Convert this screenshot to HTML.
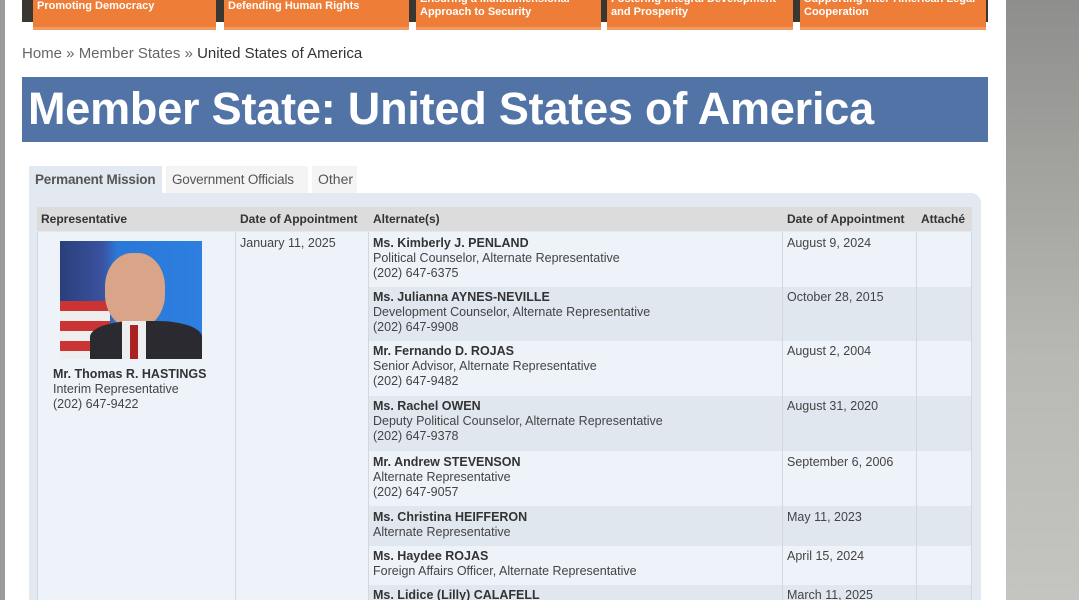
<!DOCTYPE html>
<html style="overflow:hidden;height:600px"><head><meta charset="utf-8"><style>
*{margin:0;padding:0;box-sizing:border-box}
body{width:1079px;height:600px;overflow:hidden;background:#fff;font-family:"Liberation Sans",sans-serif;color:#333;position:relative}
.abs{position:absolute}
.lg{left:0;top:0;width:5px;height:600px;background:#9a9a98}
.rg{left:1006px;top:0;width:73px;height:600px;background:linear-gradient(#8e8e8c,#b8b8b4 60%,#c4c4c0)}
.dk{background:#3a3632;height:22px;top:0}
.tile{top:0;height:30px;background:#ee7d37;color:#fff;font-weight:bold;font-size:11px;line-height:13px;padding:0 4px;border-bottom:3px solid #f29a5f;overflow:hidden;white-space:nowrap}
.bc{left:22px;top:45px;font-size:15px;color:#666}
.bc b{font-weight:normal;color:#333}
.title{left:22px;top:77px;width:966px;height:65px;background:#5273a6;color:#fff;font-weight:bold;font-size:45px;line-height:64px;padding-left:6px;letter-spacing:-0.2px;white-space:nowrap}
.tab{top:166px;height:27px;font-size:14px;line-height:27px;padding:0 6px;background:#f4f4f4;color:#555;white-space:nowrap;overflow:hidden}
.box{left:29px;top:193px;width:952px;height:407px;background:#e3e9f1;border-radius:0 10px 0 0}
.h{top:207px;height:24px;background:#dcdcdc;font-size:12px;font-weight:bold;line-height:24px;padding-left:4px;color:#333;white-space:nowrap}
.c{font-size:12.5px;line-height:15px;padding:4px 4px;color:#444;border-right:1px solid #d3d8de;overflow:hidden}
.c b{color:#333}
</style></head><body>
<div class="abs lg"></div>
<div class="abs dk" style="left:22px;width:966px"></div>
<div class="abs tile" style="left:33px;width:183px">Promoting Democracy</div>
<div class="abs tile" style="left:224px;width:185px">Defending Human Rights</div>
<div class="abs tile" style="left:416px;width:185px"><div style="margin-top:-7px">Ensuring a Multidimensional<br>Approach to Security</div></div>
<div class="abs tile" style="left:607px;width:186px"><div style="margin-top:-7px">Fostering Integral Development<br>and Prosperity</div></div>
<div class="abs tile" style="left:800px;width:186px"><div style="margin-top:-7px">Supporting Inter-American Legal<br>Cooperation</div></div>
<div class="abs rg"></div>
<div class="abs bc">Home » Member States » <b>United States of America</b></div>
<div class="abs title">Member State: United States of America</div>
<div class="abs box"></div>
<div class="abs tab" style="left:29px;width:133px;background:#e3e9f1;font-weight:bold;color:#555;font-size:13.5px;letter-spacing:-0.2px">Permanent Mission</div>
<div class="abs tab" style="left:166px;width:142px;font-size:13.5px;letter-spacing:-0.2px">Government Officials</div>
<div class="abs tab" style="left:312px;width:45px">Other</div>
<div class="abs h" style="left:37px;width:935px"></div>
<div class="abs h" style="left:37px">Representative</div>
<div class="abs h" style="left:236px">Date of Appointment</div>
<div class="abs h" style="left:369px">Alternate(s)</div>
<div class="abs h" style="left:783px">Date of Appointment</div>
<div class="abs h" style="left:917px">Attaché</div>
<div class="abs c" style="left:37px;top:232px;width:199px;height:368px;background:#eef2f9;border-left:1px solid #d3d8de">
<div style="margin:5px 0 0 18px;width:142px;height:118px;background:linear-gradient(90deg,#2a3f7a 0,#3a52a0 30%,#2a78d8 40%,#2d7fe0 100%);position:relative;overflow:hidden">
<div style="position:absolute;left:0;top:60px;width:50px;height:58px;background:repeating-linear-gradient(#c33 0 10px,#eee 10px 20px)"></div>
<div style="position:absolute;left:45px;top:12px;width:60px;height:75px;border-radius:45%;background:#d9a488"></div>
<div style="position:absolute;left:30px;top:80px;width:112px;height:40px;border-radius:40% 40% 0 0;background:#2a2a30"></div>
<div style="position:absolute;left:62px;top:80px;width:24px;height:38px;background:#eee"></div>
<div style="position:absolute;left:70px;top:84px;width:8px;height:34px;background:#a22"></div>
</div>
<div style="margin:8px 0 0 11px"><b>Mr. Thomas R. HASTINGS</b><br>Interim Representative<br>(202) 647-9422</div></div>
<div class="abs c" style="left:236px;top:232px;width:133px;height:368px;background:#eef2f9">January 11, 2025</div>

<div class="abs c" style="left:369px;top:232px;width:414px;height:55px;background:#eef2f9"><b>Ms. Kimberly J. PENLAND</b><br>Political Counselor, Alternate Representative<br>(202) 647-6375</div>
<div class="abs c" style="left:783px;top:232px;width:134px;height:55px;background:#eef2f9">August 9, 2024</div>
<div class="abs c" style="left:917px;top:232px;width:55px;height:55px;background:#eef2f9"></div>

<div class="abs c" style="left:369px;top:287px;width:414px;height:54px;background:#e1e7ef;padding-top:3px"><b>Ms. Julianna AYNES-NEVILLE</b><br>Development Counselor, Alternate Representative<br>(202) 647-9908</div>
<div class="abs c" style="left:783px;top:287px;width:134px;height:54px;background:#e1e7ef;padding-top:3px">October 28, 2015</div>
<div class="abs c" style="left:917px;top:287px;width:55px;height:54px;background:#e1e7ef"></div>

<div class="abs c" style="left:369px;top:341px;width:414px;height:55px;background:#eef2f9;padding-top:3px"><b>Mr. Fernando D. ROJAS</b><br>Senior Advisor, Alternate Representative<br>(202) 647-9482</div>
<div class="abs c" style="left:783px;top:341px;width:134px;height:55px;background:#eef2f9;padding-top:3px">August 2, 2004</div>
<div class="abs c" style="left:917px;top:341px;width:55px;height:55px;background:#eef2f9"></div>

<div class="abs c" style="left:369px;top:396px;width:414px;height:55px;background:#e1e7ef;padding-top:3px"><b>Ms. Rachel OWEN</b><br>Deputy Political Counselor, Alternate Representative<br>(202) 647-9378</div>
<div class="abs c" style="left:783px;top:396px;width:134px;height:55px;background:#e1e7ef;padding-top:3px">August 31, 2020</div>
<div class="abs c" style="left:917px;top:396px;width:55px;height:55px;background:#e1e7ef"></div>

<div class="abs c" style="left:369px;top:451px;width:414px;height:55px;background:#eef2f9"><b>Mr. Andrew STEVENSON</b><br>Alternate Representative<br>(202) 647-9057</div>
<div class="abs c" style="left:783px;top:451px;width:134px;height:55px;background:#eef2f9">September 6, 2006</div>
<div class="abs c" style="left:917px;top:451px;width:55px;height:55px;background:#eef2f9"></div>

<div class="abs c" style="left:369px;top:506px;width:414px;height:40px;background:#e1e7ef"><b>Ms. Christina HEIFFERON</b><br>Alternate Representative</div>
<div class="abs c" style="left:783px;top:506px;width:134px;height:40px;background:#e1e7ef">May 11, 2023</div>
<div class="abs c" style="left:917px;top:506px;width:55px;height:40px;background:#e1e7ef"></div>

<div class="abs c" style="left:369px;top:546px;width:414px;height:39px;background:#eef2f9;padding-top:3px"><b>Ms. Haydee ROJAS</b><br>Foreign Affairs Officer, Alternate Representative</div>
<div class="abs c" style="left:783px;top:546px;width:134px;height:39px;background:#eef2f9;padding-top:3px">April 15, 2024</div>
<div class="abs c" style="left:917px;top:546px;width:55px;height:39px;background:#eef2f9"></div>

<div class="abs c" style="left:369px;top:585px;width:414px;height:15px;background:#e1e7ef;padding-top:3px"><b>Ms. Lidice (Lilly) CALAFELL</b></div>
<div class="abs c" style="left:783px;top:585px;width:134px;height:15px;background:#e1e7ef;padding-top:3px">March 11, 2025</div>
<div class="abs c" style="left:917px;top:585px;width:55px;height:15px;background:#e1e7ef"></div>
</body></html>
